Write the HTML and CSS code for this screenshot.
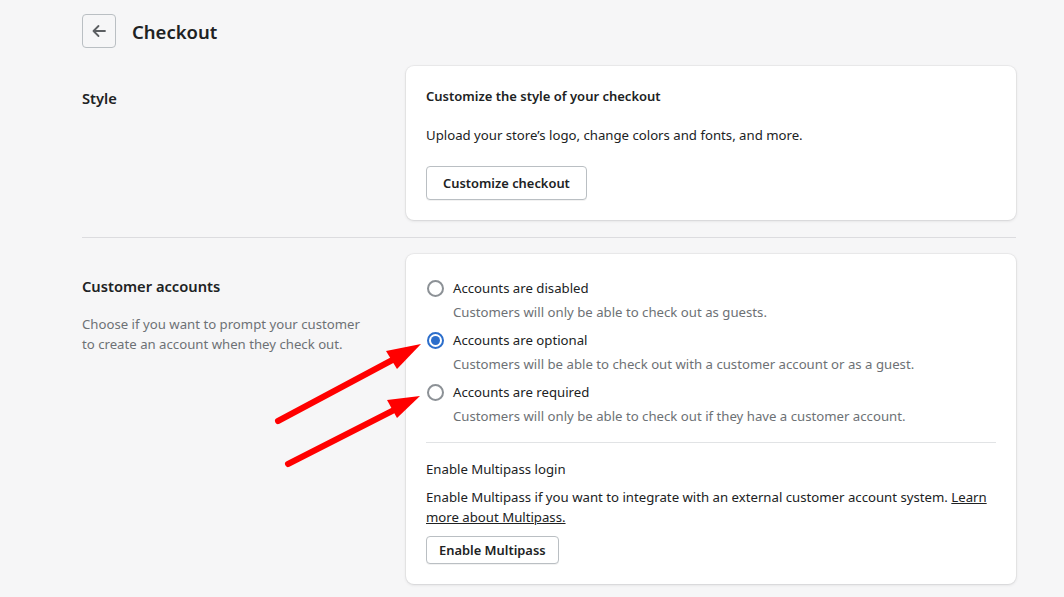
FILE: index.html
```html
<!DOCTYPE html>
<html lang="en">
<head>
  <meta charset="UTF-8">
  <meta name="viewport" content="width=device-width, initial-scale=1.0">
  <title>Checkout</title>
  <link rel="stylesheet" href="styles.css">
</head>
<body>

  <div class="page">
    <div class="header">
      <button class="back-btn" aria-label="Back">
        <svg width="16" height="16" viewBox="0 0 16 16">
          <path d="M14 8H2.5M7.5 3L2.5 8l5 5" fill="none" stroke="#5c5f62" stroke-width="1.8" stroke-linecap="round" stroke-linejoin="round"/>
        </svg>
      </button>
      <h1>Checkout</h1>
    </div>

    <div class="section">
      <div class="section-info">
        <h2>Style</h2>
      </div>
      <div class="card">
        <h3>Customize the style of your checkout</h3>
        <p class="card-text">Upload your store’s logo, change colors and fonts, and more.</p>
        <button class="btn">Customize checkout</button>
      </div>
    </div>

    <div class="section section-border">
      <div class="section-info">
        <h2>Customer accounts</h2>
        <p class="subdued">Choose if you want to prompt your customer to create an account when they check out.</p>
      </div>
      <div class="card card-choices">
        <label class="choice">
          <span class="radio"></span>
          <span class="choice-body">
            <span class="choice-label">Accounts are disabled</span>
            <span class="choice-help">Customers will only be able to check out as guests.</span>
          </span>
        </label>
        <label class="choice">
          <span class="radio checked"></span>
          <span class="choice-body">
            <span class="choice-label">Accounts are optional</span>
            <span class="choice-help">Customers will be able to check out with a customer account or as a guest.</span>
          </span>
        </label>
        <label class="choice">
          <span class="radio"></span>
          <span class="choice-body">
            <span class="choice-label">Accounts are required</span>
            <span class="choice-help">Customers will only be able to check out if they have a customer account.</span>
          </span>
        </label>

        <div class="card-divider"></div>

        <div class="subsection">
          <p class="sub-title">Enable Multipass login</p>
          <p class="sub-text">Enable Multipass if you want to integrate with an external customer account system. <a href="#">Learn more about Multipass.</a></p>
          <button class="btn btn-slim">Enable Multipass</button>
        </div>
      </div>
    </div>
  </div>

  <svg class="arrows" width="1064" height="597" viewBox="0 0 1064 597">
    <g stroke="#ff0000" stroke-width="6" stroke-linecap="round" fill="none">
      <line x1="278" y1="421" x2="398" y2="357"/>
      <line x1="288" y1="464" x2="398" y2="408"/>
    </g>
    <g fill="#ff0000">
      <polygon points="421,344 386,351 397,369"/>
      <polygon points="420,396 387,400 397,418"/>
    </g>
  </svg>

</body>
</html>
```

FILE: styles.css
```css
body {
  font-family: 'Noto Sans', 'Open Sans', sans-serif;
  font-size: 13.2px;
  line-height: 20px;
  color: #202223;
  background-color: #f6f6f7;
  margin: 0;
}

.page {
  width: 934px;
  margin-left: 82px;
}

.header {
  display: flex;
  align-items: center;
  gap: 16px;
  padding-top: 14px;
  height: 34px;
}

.back-btn {
  width: 34px;
  height: 34px;
  display: flex;
  align-items: center;
  justify-content: center;
  background: transparent;
  border: 1px solid #babfc3;
  border-radius: 4px;
  padding: 0;
}

h1 {
  font-size: 18.5px;
  font-weight: 600;
  margin: 2px 0 0;
  line-height: 28px;
}

.section {
  display: flex;
  padding: 18px 0 17px;
}

.section-border {
  border-top: 1px solid #dcdcdf;
  padding-top: 16px;
}

.section-info {
  width: 324px;
  padding-top: 20px;
}

h2 {
  font-size: 14.7px;
  font-weight: 600;
  margin: 0;
  line-height: 24px;
}

.subdued {
  color: #6d7175;
  margin: 16px 0 0;
  max-width: 290px;
}

.card {
  flex: 1;
  background: #fff;
  border-radius: 8px;
  box-shadow: 0 0 0 1px rgba(63, 63, 68, 0.05), 0 1px 3px rgba(63, 63, 68, 0.15);
  padding: 20px;
}

.card-choices {
  padding-top: 24px;
}

h3 {
  font-size: 13px;
  font-weight: 600;
  margin: 0;
}

.card-text {
  margin: 19px 0 21px;
}

.btn {
  font-family: inherit;
  font-size: 12.9px;
  font-weight: 600;
  color: #202223;
  background: #fff;
  border: 1px solid #babfc3;
  border-radius: 4px;
  padding: 0 16px;
  height: 34px;
  box-shadow: 0 1px 0 rgba(0, 0, 0, 0.05);
}

.btn-slim {
  height: 28px;
  padding: 0 12px;
}

.choice {
  display: flex;
  gap: 9px;
  margin-bottom: 8px;
}

.choice:last-of-type {
  margin-bottom: 0;
}

.radio {
  width: 13px;
  height: 13px;
  border: 2px solid #8c9196;
  border-radius: 50%;
  margin: 1.5px 0 0 1px;
  flex-shrink: 0;
  box-sizing: content-box;
  position: relative;
}

.radio.checked {
  border-color: #2c6ecb;
}

.radio.checked::after {
  content: "";
  position: absolute;
  top: 2px;
  left: 2px;
  width: 9px;
  height: 9px;
  border-radius: 50%;
  background: #2c6ecb;
}

.choice-body {
  display: flex;
  flex-direction: column;
  gap: 4px;
}

.choice-help {
  color: #6d7175;
}

.card-divider {
  border-top: 1px solid #e1e3e5;
  margin: 16px 0;
}

.sub-title {
  margin: 0 0 8px;
}

.sub-text {
  margin: 0 0 9px;
}

.sub-text a {
  color: #202223;
}

.arrows {
  position: absolute;
  top: 0;
  left: 0;
  pointer-events: none;
}
```
